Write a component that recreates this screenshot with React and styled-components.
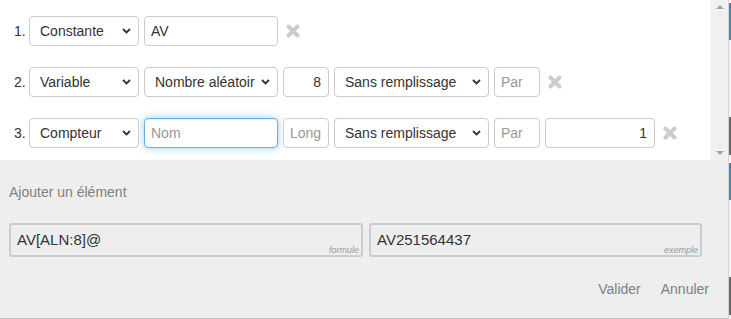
import styled, { createGlobalStyle } from "styled-components";

const GlobalStyle = createGlobalStyle`
  html, body {
    margin: 0;
    padding: 0;
    background: #fff;
  }
  body {
    font-family: "Liberation Sans", Arial, sans-serif;
    color: #333;
  }
`;

const Page = styled.div`
  display: flex;
  width: 731px;
  height: 319px;
  overflow: hidden;
`;

const Panel = styled.div`
  width: 728px;
  height: 318px;
  border-right: 1px solid #d4d4d4;
  border-bottom: 1px solid #c4c4c4;
  display: flex;
  flex-direction: column;
`;

const EdgeStrip = styled.div`
  width: 2px;
  display: flex;
  flex-direction: column;
`;

const EdgeBit = styled.div`
  height: ${(p) => p.$h}px;
  background: ${(p) => p.$c};
`;

const ScrollArea = styled.div`
  display: flex;
  height: 160px;
  background: #fff;
`;

const Rows = styled.div`
  flex: 1;
  padding: 16px 0 0 14px;
`;

const Scrollbar = styled.div`
  width: 17px;
  background: #f1f1f1;
  display: flex;
  flex-direction: column;
  justify-content: space-between;
  align-items: center;
  padding: 5px 0;
  box-sizing: border-box;
`;

const Arrow = styled.div`
  width: 0;
  height: 0;
  border-left: 4px solid transparent;
  border-right: 4px solid transparent;
  ${(p) =>
    p.$down
      ? "border-top: 4px solid #a3a3a3;"
      : "border-bottom: 4px solid #a3a3a3;"}
`;

const Row = styled.div`
  display: flex;
  align-items: center;
  gap: 5px;
  height: 30px;
  margin-bottom: 21px;
`;

const Index = styled.span`
  width: 10px;
  font-size: 14px;
  color: #333;
`;

const SelectWrap = styled.div`
  position: relative;
  width: ${(p) => p.$w}px;
  height: 30px;
`;

const Select = styled.select`
  appearance: none;
  width: 100%;
  height: 30px;
  box-sizing: border-box;
  border: 1px solid #ccc;
  border-radius: 4px;
  background: #fff;
  padding: 0 22px 0 10px;
  font-family: "Liberation Sans", Arial, sans-serif;
  font-size: 14px;
  color: #333;
  white-space: nowrap;
  overflow: hidden;
  outline: none;
`;

const Chevron = styled.svg`
  position: absolute;
  right: 8px;
  top: 12px;
  pointer-events: none;
`;

const Input = styled.input`
  width: ${(p) => p.$w}px;
  height: 30px;
  box-sizing: border-box;
  border: 1px solid ${(p) => (p.$focused ? "#66afe9" : "#ccc")};
  border-radius: 4px;
  background: #fff;
  padding: 0 7px 0 6px;
  font-family: "Liberation Sans", Arial, sans-serif;
  font-size: 14px;
  color: #333;
  text-align: ${(p) => (p.$right ? "right" : "left")};
  outline: none;
  box-shadow: ${(p) =>
    p.$focused
      ? "inset 0 1px 1px rgba(0,0,0,.075), 0 0 8px rgba(102,175,233,.6)"
      : "none"};
  &::placeholder {
    color: #999;
  }
`;

const Remove = styled.button`
  border: none;
  background: none;
  padding: 0;
  margin-left: 3px;
  width: 14px;
  height: 14px;
  display: flex;
  cursor: pointer;
`;

const Footer = styled.div`
  flex: 1;
  background: #eee;
  padding: 24px 19px 0 9px;
  display: flex;
  flex-direction: column;
`;

const AddLink = styled.div`
  font-size: 14px;
  line-height: 16px;
  color: #808080;
`;

const FormulaRow = styled.div`
  display: flex;
  gap: 6px;
  margin-top: 23px;
`;

const FormulaBox = styled.div`
  position: relative;
  width: ${(p) => p.$w}px;
  height: 34px;
  box-sizing: border-box;
  border: 2px solid #ccc;
  border-radius: 3px;
  padding: 6px 0 0 6px;
  font-size: 15px;
  color: #333;
`;

const FormulaTag = styled.span`
  position: absolute;
  right: 2px;
  bottom: 0px;
  font-size: 9px;
  font-style: italic;
  color: #999;
`;

const Actions = styled.div`
  display: flex;
  justify-content: flex-end;
  gap: 20px;
  margin-top: 24px;
`;

const ActionButton = styled.button`
  border: none;
  background: none;
  padding: 0;
  font-family: "Liberation Sans", Arial, sans-serif;
  font-size: 14px;
  line-height: 16px;
  color: #808080;
  cursor: pointer;
`;

const Dropdown = ({ w, value }) => (
  <SelectWrap $w={w}>
    <Select defaultValue={value}>
      <option>{value}</option>
    </Select>
    <Chevron width="9" height="6" viewBox="0 0 9 6">
      <path d="M1 1l3.5 3.5L8 1" fill="none" stroke="#333" strokeWidth="1.8" />
    </Chevron>
  </SelectWrap>
);

const RemoveIcon = () => (
  <Remove aria-label="Supprimer">
    <svg width="14" height="14" viewBox="0 0 14 14">
      <path
        d="M2.5 2.5L11.5 11.5M11.5 2.5L2.5 11.5"
        stroke="#ccc"
        strokeWidth="4"
        strokeLinecap="round"
      />
    </svg>
  </Remove>
);

export default function App() {
  return (
    <>
      <GlobalStyle />
      <Page>
        <Panel>
          <ScrollArea>
            <Rows>
              <Row>
                <Index>1.</Index>
                <Dropdown w={110} value="Constante" />
                <Input $w={134} defaultValue="AV" />
                <RemoveIcon />
              </Row>
              <Row>
                <Index>2.</Index>
                <Dropdown w={110} value="Variable" />
                <Dropdown w={134} value="Nombre aléatoire" />
                <Input $w={46} $right defaultValue="8" />
                <Dropdown w={155} value="Sans remplissage" />
                <Input $w={46} placeholder="Par" />
                <RemoveIcon />
              </Row>
              <Row>
                <Index>3.</Index>
                <Dropdown w={110} value="Compteur" />
                <Input $w={134} $focused placeholder="Nom" />
                <Input $w={46} placeholder="Long" />
                <Dropdown w={155} value="Sans remplissage" />
                <Input $w={46} placeholder="Par" />
                <Input $w={110} $right defaultValue="1" />
                <RemoveIcon />
              </Row>
            </Rows>
            <Scrollbar>
              <Arrow />
              <Arrow $down />
            </Scrollbar>
          </ScrollArea>
          <Footer>
            <AddLink>Ajouter un élément</AddLink>
            <FormulaRow>
              <FormulaBox $w={354}>
                AV[ALN:8]@
                <FormulaTag>formule</FormulaTag>
              </FormulaBox>
              <FormulaBox $w={333}>
                AV251564437
                <FormulaTag>exemple</FormulaTag>
              </FormulaBox>
            </FormulaRow>
            <Actions>
              <ActionButton>Valider</ActionButton>
              <ActionButton>Annuler</ActionButton>
            </Actions>
          </Footer>
        </Panel>
        <EdgeStrip>
          <EdgeBit $h={3} $c="#fff" />
          <EdgeBit $h={37} $c="#3f8ea8" />
          <EdgeBit $h={77} $c="#f4f4f4" />
          <EdgeBit $h={38} $c="#6b6b6b" />
          <EdgeBit $h={8} $c="#f4f4f4" />
          <EdgeBit $h={37} $c="#3f8ea8" />
          <EdgeBit $h={77} $c="#f4f4f4" />
          <EdgeBit $h={38} $c="#6b6b6b" />
          <EdgeBit $h={4} $c="#f4f4f4" />
        </EdgeStrip>
      </Page>
    </>
  );
}
